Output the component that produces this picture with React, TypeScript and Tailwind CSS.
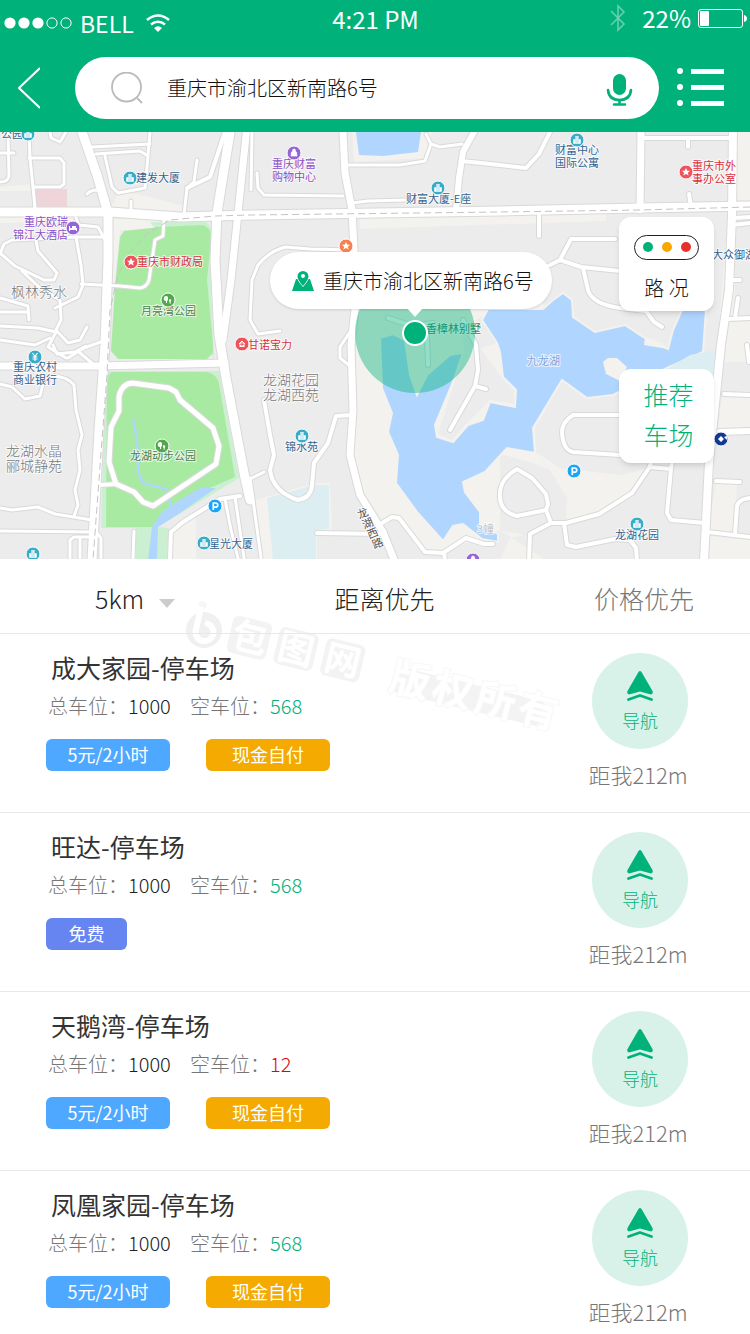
import React from "react";

type Road = [path: string, width: number];
type Label = { x: number; y: number; lines: string[]; color: string; size?: number; weight?: number };
type Poi = { x: number; y: number; color: string; kind: "building" | "star" | "tree" | "bag" | "bed" | "yen" | "cross" | "parking" | "bank" };
type Lot = { name: string; total: number; free: number; tags: ("paid" | "cash" | "free")[] };

const BLUE = "#34648f";
const TEAL = "#39acc8";
const PURPLE = "#8a4fc8";
const RED = "#d8303f";
const GREEN = "#4d7d50";

const lots: Lot[] = [
  { name: "成大家园-停车场", total: 1000, free: 568, tags: ["paid", "cash"] },
  { name: "旺达-停车场", total: 1000, free: 568, tags: ["free"] },
  { name: "天鹅湾-停车场", total: 1000, free: 12, tags: ["paid", "cash"] },
  { name: "凤凰家园-停车场", total: 1000, free: 568, tags: ["paid", "cash"] },
];

const tagStyles = {
  paid: { text: "5元/2小时", className: "w-[124px] bg-[#4fa8ff]" },
  cash: { text: "现金自付", className: "w-[124px] bg-[#f4aa00]" },
  free: { text: "免费", className: "w-[81px] bg-[#6685f0]" },
};

const roads: Road[] = [
  // side streets, west
  ["M29 132 L30 158 L33 187 L35 208", 3],
  ["M29 158 L60 158 L64 163 L64 184 L60 187 L33 187", 3],
  ["M0 153 L14 153 M8 132 L9 176 Q8 182 0 182", 3],
  ["M50 132 L51 138 L60 142 L66 132", 3],
  ["M96 154 L140 151 L148 156 L145 188 L118 193 L112 187 L105 156", 3],
  ["M148 155 L150 132 M92 147 L150 144", 3],
  ["M98 190 Q90 190 87 194 M131 201 L131 212", 3],
  ["M197 160 L194 182 L187 188 L184 215", 3],
  ["M225 132 L210 177 L187 188", 4],
  ["M76 218 L79 225 L98 227 L105 240", 3],
  ["M0 254 L4 244 L12 240 L76 237 L106 237", 3],
  ["M76 237 L81 265 L83 285 L78 297 L55 308", 3],
  ["M0 253 L15 266 L44 280 L54 280 L57 273 L38 251 L36 240", 3],
  ["M22 271 L40 288 L60 300 L61 320 L56 330 L68 343 L80 340 L87 327", 3],
  ["M81 284 L120 286 L140 288 Q147 287 149 280 L155 240 L163 236 L164 219", 3],
  ["M0 298 L28 306 L29 320 M0 312 L28 312 M0 326 L38 328 L56 332 M0 340 L35 345 L50 338", 3],
  ["M56 332 L48 347 L66 358 M68 358 L84 348 L106 340", 3],
  ["M53 345 L57 354 L75 352 L86 346 M80 353 L92 363", 3],
  ["M0 384 L12 387 L25 399 L40 396 L44 380 L54 376", 3],
  ["M54 376 Q68 377 74 385 L76 410 L82 435 L78 450 L80 470 L75 490 L78 505 L74 516", 3],
  ["M0 508 L12 510 L38 507 L55 514 L92 520", 3],
  ["M0 531 L96 532 L101 538 L101 558 M70 558 L70 540 L74 537 L95 537 M80 537 L80 558", 3],
  ["M134 531 L133 558", 3],
  // park loop
  ["M132 383 L169 388 L176 392 L180 400 L213 428 L219 446 L216 464 L153 506 L143 502 L134 492 L116 484 L109 462 L111 427 L119 411 L119 396 Q122 384 132 383Z", 5],
  ["M116 484 L99 485", 4],
  ["M170 558 L171 532 L183 522 L220 499 L240 496", 4],
  ["M225 499 L231 530 L238 558 M235 497 L244 558", 3],
  ["M248 480 L264 472 M250 478 L261 558", 3],
  // centre
  ["M252 132 L251 190 M257 173 L258 188 L264 195 L343 196", 3],
  ["M347 165 L400 165 L425 161 L431 144 L426 134 M431 144 L440 147 L462 144 M352 203 L368 201 L405 200", 3],
  ["M474 132 L463 152 L459 178 L456 210", 6],
  ["M462 161 L500 165 L526 168 L539 154 L550 132", 4],
  ["M354 250 L310 249 L285 247 Q268 252 258 265 L252 280 L250 320 L258 334 L280 331", 3],
  ["M350 332 L340 347 L340 358 L350 366", 3],
  ["M264 400 L270 435 L274 455 L270 470 Q273 492 298 500 Q311 498 312 485 L314 463 L328 443 L336 416 L352 415", 4],
  ["M317 533 L383 534", 4],
  ["M382 523 L392 517 L399 518 L425 552 L443 553 L466 538 L484 544 L493 544 M444 553 L445 560", 4],
  ["M388 318 L413 326 L433 323 M427 335 L428 365 M463 320 L476 345 L478 370 L475 386 L450 430 M475 386 L486 389", 4],
  // east
  ["M640 138 L732 138 M688 138 L688 147 M689 194 L691 207", 4],
  ["M539 213 L539 236 M615 239 L571 239 L560 260 L581 267 L620 271 M560 260 L540 270", 4],
  ["M583 268 L588 290 Q592 304 620 308 L646 311 L654 322 L662 327", 4],
  ["M619 415 L573 415 Q562 422 562 432 Q563 450 573 452 L620 455", 4],
  ["M517 469 L532 478 L546 494 L548 504 L546 510 L517 516 Q501 512 500 498 Q498 480 517 469Z", 4],
  ["M546 510 L551 523 L566 523 L599 514 L632 493 L649 468 L652 460", 4],
  ["M551 523 L530 534 L529 560 M564 523 L567 545 L576 547 L615 539 L630 540 L636 548 L637 560", 4],
  ["M650 467 L671 469 L667 513 L671 520 L705 523 M671 469 L673 455", 4],
  ["M716 481 L740 482 M708 532 L750 537 M735 534 L737 506 Q739 499 750 498", 4],
  ["M724 394 L750 395 M734 218 L750 217 M732 225 L750 223 M730 280 L740 280 M738 298 L735 318 M728 319 L750 318 M747 345 L749 362", 4],
  ["M720 432 L750 431", 6],
  // main roads
  ["M80 126 L97 175 L108 213 L108 260 L105 345 L99 430 L92 560", 9],
  ["M0 366 L100 366 L225 363", 7],
  ["M343 132 L345 173 L352 210 L354 250 L356 300 L351 345 L353 410 L350 455 L360 495 L383 532 L395 562", 7],
  ["M641 132 L640 210", 7],
  ["M733 126 L732 215 L729 290 L721 345 L709 462 L704 562", 8],
  ["M231 126 L217 213 L215 260 L219 335 L226 378 L245 478 L250 500", 9],
  ["M247 126 L238 213 L231 280 L223 340", 7],
  ["M0 212 L110 212 L180 217 L250 215 L500 211 L640 208 L750 206", 9],
];

const labels: Label[] = [
  { x: 1, y: 138, lines: ["公园"], color: BLUE },
  { x: 136, y: 182, lines: ["建发大厦"], color: BLUE },
  { x: 24, y: 226, lines: ["重庆欧瑞"], color: PURPLE },
  { x: 13, y: 239, lines: ["锦江大酒店"], color: PURPLE },
  { x: 137, y: 266, lines: ["重庆市财政局"], color: RED },
  { x: 141, y: 315, lines: ["月亮湾公园"], color: GREEN },
  { x: 11, y: 297, lines: ["枫林秀水"], color: "#777", size: 14, weight: 300 },
  { x: 272, y: 168, lines: ["重庆财富", "购物中心"], color: PURPLE },
  { x: 406, y: 203, lines: ["财富大厦-E座"], color: BLUE },
  { x: 555, y: 154, lines: ["财富中心", "国际公寓"], color: BLUE },
  { x: 692, y: 170, lines: ["重庆市外", "事办公室"], color: RED },
  { x: 712, y: 259, lines: ["大众御湖"], color: BLUE },
  { x: 248, y: 349, lines: ["甘诺宝力"], color: RED },
  { x: 426, y: 333, lines: ["香樟林别墅"], color: "#28836f" },
  { x: 263, y: 385, lines: ["龙湖花园"], color: "#777", size: 14, weight: 300 },
  { x: 263, y: 400, lines: ["龙湖西苑"], color: "#777", size: 14, weight: 300 },
  { x: 285, y: 451, lines: ["锦水苑"], color: BLUE },
  { x: 13, y: 371, lines: ["重庆农村", "商业银行"], color: BLUE },
  { x: 6, y: 456, lines: ["龙湖水晶"], color: "#777", size: 14, weight: 300 },
  { x: 6, y: 471, lines: ["郦城静苑"], color: "#777", size: 14, weight: 300 },
  { x: 130, y: 460, lines: ["龙湖动步公园"], color: GREEN },
  { x: 209, y: 548, lines: ["星光大厦"], color: BLUE },
  { x: 527, y: 365, lines: ["九龙湖"], color: "#83a3d8" },
  { x: 477, y: 533, lines: ["3幢"], color: "#b3b8bd", weight: 300 },
  { x: 615, y: 539, lines: ["龙湖花园"], color: BLUE },
];

const pois: Poi[] = [
  { x: 28, y: 134, color: TEAL, kind: "building" },
  { x: 130, y: 178, color: TEAL, kind: "building" },
  { x: 73, y: 228, color: "#9464d8", kind: "bed" },
  { x: 131, y: 262, color: "#f0525c", kind: "star" },
  { x: 168, y: 300, color: "#52a84c", kind: "tree" },
  { x: 294, y: 153, color: "#9464d8", kind: "bag" },
  { x: 346, y: 246, color: "#f58250", kind: "star" },
  { x: 438, y: 188, color: TEAL, kind: "building" },
  { x: 577, y: 140, color: TEAL, kind: "building" },
  { x: 686, y: 172, color: "#f0525c", kind: "star" },
  { x: 242, y: 344, color: "#f0525c", kind: "cross" },
  { x: 35, y: 357, color: TEAL, kind: "yen" },
  { x: 302, y: 436, color: TEAL, kind: "building" },
  { x: 162, y: 446, color: "#52a84c", kind: "tree" },
  { x: 215, y: 506, color: "#1ba5f8", kind: "parking" },
  { x: 574, y: 471, color: "#1ba5f8", kind: "parking" },
  { x: 204, y: 543, color: TEAL, kind: "building" },
  { x: 33, y: 554, color: TEAL, kind: "building" },
  { x: 637, y: 524, color: TEAL, kind: "building" },
  { x: 473, y: 560, color: "#9464d8", kind: "bag" },
  { x: 721, y: 439, color: "#123a91", kind: "bank" },
];

const glyphs = {
  building: <path d="M-4 4V-1H-2V-4H2V-1H4V4Z M-1 -3V3 M1 -3V3" fill="#fff" stroke={TEAL} strokeWidth="0.5" />,
  star: <path d="M0 -4L1.3 -1.3L4 -1.2L1.9 .7L2.6 3.6L0 2L-2.6 3.6L-1.9 .7L-4 -1.2L-1.3 -1.3Z" fill="#fff" />,
  tree: <path d="M-1.5 -4A2 2 0 0 1 0 -1.5A2 2 0 0 1 -1 1V3H-2V1A2.5 2.5 0 0 1 -1.5 -4M2 -1A1.7 1.7 0 0 1 2.5 2V4H1.7V2A1.7 1.7 0 0 1 2 -1" fill="#fff" />,
  bag: <path d="M-3 3L-2.5 -1H2.5L3 3ZM-1.5 -1V-2.5A1.5 1.5 0 0 1 1.5 -2.5V-1" fill="#fff" stroke="#fff" strokeWidth="0.7" />,
  bed: <path d="M-4 -2H-3V0H4V3H3V2H-3V3H-4ZM-1 -2H3V0H-1Z" fill="#fff" />,
  yen: <path d="M-2.5 -4L0 -.5L2.5 -4M0 -.5V4M-2.5 0H2.5M-2.5 2H2.5" fill="none" stroke="#fff" strokeWidth="1.2" />,
  cross: <path d="M-4 0L0 -4L4 0H3V3.5H-3V0ZM0 -1.8V2.2M-2 .2H2" fill="#fff" stroke="#f0525c" strokeWidth="1" />,
  parking: <path d="M-1.7 4V-3H.7A2 2 0 0 1 .7 1.2H-1.7" fill="none" stroke="#fff" strokeWidth="1.7" />,
  bank: <path d="M0 -3L3 0L0 3L-3 0ZM3 -2L6 -3V1Z" fill="#fff" />,
};

function CityMap() {
  return (
    <svg
      viewBox="0 132 750 427"
      preserveAspectRatio="xMidYMin slice"
      className="block h-[427px] w-full bg-[#ececec]"
      role="img"
      aria-label="重庆市渝北区地图"
    >
      {/* open land */}
      <g fill="#f4f2ee">
        <path d="M352 132L354 162L425 158L432 132Z" />
        <path d="M357 300L354 410L352 455L362 495L384 527L398 514L425 550L445 552L500 530L545 560L500 560L510 538L530 534L550 523L566 523L568 498L550 470L536 452L545 410L562 370L540 290L500 304L440 300Z" />
        <path d="M535 450L560 468L622 475L650 468L630 494L599 514L567 523L566 495Z" />
        <path d="M630 225H727L700 560H708L721 345H735V225Z" />
        <path d="M734 132H750V200H734ZM706 536L750 539V560H704ZM727 320H750V362H722ZM722 397H750V429H718ZM716 483H737L734 534H708Z" />
        <path d="M255 500L316 483L330 483L332 532L317 534V560H262Z" />
        <path d="M120 190L150 197L184 206V211L110 210ZM112 219H205V228L120 230L114 284H110ZM0 217H76V222L0 223ZM0 187L33 184V191H0ZM173 530L196 515V560H171Z" />
        <path d="M360 218L606 213V221L360 229Z" />
      </g>
      {/* blocks on the lake shore */}
      <g fill="#ececec">
        <path d="M462 330L488 312L540 300L482 318L497 343L465 353Z" />
        <path d="M563 382L587 400L620 398V475L560 468L536 452L535 428Z" />
        <path d="M500 454L530 462L550 470L567 498L566 520L530 536L500 530Z" />
        <path d="M464 352L478 345L502 378L514 390V404L490 400L466 424L452 440L438 434Z" />
      </g>
      <path d="M34 189H67V207H36Z" fill="#efd5d9" />
      {/* parks */}
      <g fill="#cbefd1">
        <path d="M150 222L205 221L214 230L211 290L214 358L206 345L160 235Z" />
        <path d="M106 371L219 371L239 478L158 527L169 528L167 560H136V528H101Z" />
      </g>
      <g fill="#a9eaa3">
        <path d="M124 231L160 227L203 225Q213 229 211 240L207 280L213 345V353L207 359H118L111 351L115 287L120 237Z" />
        <path d="M107 376L112 372H207Q217 374 219 384L235 477L205 490L157 527H106Z" />
      </g>
      {/* water */}
      <g fill="#b0d6ff">
        <path d="M356 132L359 155L383 156L418 152L421 132Z" />
        <path d="M147 403L134 418L138 438L140 473L144 482L167 488L172 505L200 488L216 488L180 513L158 527L157 560H148L152 527L163 511L170 507L165 490L142 484L137 473L136 440L132 420Z" />
        <path
          d="M380 338L393 334L405 340L410 375L417 395L427 375L450 355L463 353L453 382L435 425L437 437L453 442L468 425L483 420L490 402L500 404L515 407L516 390L503 377L500 352L497 343L482 320L488 309H543L553 300L563 293L572 300L573 317L595 332L625 325L643 337L668 349L673 330L682 310H706L703 352L667 368L613 395L587 398L562 380L533 428L535 453L507 448L485 472L463 482L465 492L480 512V524L498 534V542L482 539L463 524L453 526L443 541L417 512L396 483L398 455L388 432L392 413L382 388Z"
          stroke="#f4f2ee"
          strokeWidth="2"
        />
      </g>
      <g fill="#dceef2">
        <path d="M267 498L315 485H329V529L316 530V560H273Z" />
        <path d="M667 369L690 355L716 350L714 375H667Z" />
      </g>
      <path d="M603 362L608 358L617 358L627 367L620 381L606 374ZM644 345L668 349L662 343L645 337Z" fill="#f4f2ee" />

      {/* roads: edge first, then surface */}
      <g fill="none" strokeLinejoin="round" strokeLinecap="round">
        {roads.map(([d, w], i) => (
          <path key={i} d={d} stroke="#d9d9d9" strokeWidth={w + 2} />
        ))}
        {roads.map(([d, w], i) => (
          <path key={i} d={d} stroke="#fff" strokeWidth={w} />
        ))}
        <g stroke="#c4c4c4" strokeDasharray="7 4" strokeLinecap="butt">
          <path d="M750 207L640 210L500 212L250 215L215 216L170 220L148 233L130 252L118 275L110 310L107 375L102 440L93 560" />
        </g>
      </g>

      <g fontFamily='"Noto Sans CJK SC", sans-serif' stroke="#fff" strokeOpacity="0.7" strokeWidth="2" paintOrder="stroke">
        {labels.map((label) => (
          <text key={`${label.x}-${label.y}`} fill={label.color} fontSize={label.size ?? 11} fontWeight={label.weight ?? 400}>
            {label.lines.map((line, i) => (
              <tspan key={line} x={label.x} y={label.y + i * 13}>
                {line}
              </tspan>
            ))}
          </text>
        ))}
        <g fill="#555" fontSize="11">
          {["龙", "湖", "西", "路"].map((char, i) => (
            <text key={char} transform={`translate(${359 + i * 5} ${519 + i * 10}) rotate(-22)`}>
              {char}
            </text>
          ))}
        </g>
      </g>

      {pois.map((poi) => (
        <g key={`${poi.x}-${poi.y}`} transform={`translate(${poi.x} ${poi.y})`}>
          <circle r="7" fill={poi.color} stroke="#fff" strokeWidth="1" />
          {glyphs[poi.kind]}
        </g>
      ))}

      {/* current position */}
      <circle cx="415" cy="333" r="60" fill="#00b27a" fillOpacity="0.42" />
      <circle cx="415" cy="333" r="12" fill="#00b27a" stroke="#fff" strokeWidth="2" />
    </svg>
  );
}

function StatusBar() {
  return (
    <div className="grid h-10 grid-cols-3 pl-1 pr-[3px] text-2xl leading-[38px]">
      <div className="flex items-center pt-1">
        <svg className="h-3 w-[68px]" viewBox="0 0 68 12" aria-hidden="true">
          {[6, 20, 34].map((x) => (
            <circle key={x} cx={x} cy="6" r="5.6" fill="#fff" />
          ))}
          {[48, 62].map((x) => (
            <circle key={x} cx={x} cy="6" r="5.1" fill="none" stroke="#fff" />
          ))}
        </svg>
        <span className="ml-2 text-[23px]">BELL</span>
        <svg className="ml-3 h-[19px] w-6" viewBox="0 0 24 19" fill="none" stroke="#fff" strokeWidth="2.6" aria-label="Wi-Fi">
          <path d="M1 6Q12 -3 23 6M5 10.5Q12 5 19 10.5" />
          <path d="M8 14Q12 10.500 16 14L12 18Z" fill="#fff" stroke="none" />
        </svg>
      </div>
      <time className="text-center">4:21 PM</time>
      <div className="flex h-9 items-center justify-end">
        <svg className="h-7 w-4" viewBox="0 0 16 28" fill="none" stroke="#66d0af" strokeWidth="1.600" aria-label="Bluetooth">
          <path d="M1 7L14 20L8 26V2L14 8L1 21" />
        </svg>
        <span className="ml-4">22%</span>
        <svg className="ml-[7px] h-[19px] w-[49px]" viewBox="0 0 49 19" aria-hidden="true">
          <rect x="0.500" y="0.500" width="44" height="18" rx="2.500" fill="none" stroke="#fff" />
          <rect x="2" y="2" width="9" height="15" rx="1" fill="#fff" />
          <path d="M46 6Q49 7 49 9.500Q49 12 46 13Z" fill="#fff" />
        </svg>
      </div>
    </div>
  );
}

function Header() {
  return (
    <header className="bg-[#00b27a] pb-[13px] text-white">
      <StatusBar />
      <div className="mt-[17px] flex items-center pl-[18px] pr-[26px]">
        <button type="button" aria-label="返回">
          <svg className="h-[42px] w-[22px]" viewBox="0 0 22 42" fill="none" stroke="#fff" strokeWidth="2">
            <path d="M22 1L1 21L22 41" />
          </svg>
        </button>
        <div className="ml-[35px] flex h-[62px] flex-1 items-center rounded-full bg-white pl-9 pr-[26px]">
          <svg className="h-8 w-8 shrink-0" viewBox="0 0 32 32" fill="none" stroke="#bbb" strokeWidth="1.800" aria-hidden="true">
            <circle cx="15.500" cy="15" r="14.500" />
            <path d="M26 26L31 31" />
          </svg>
          <input
            type="text"
            aria-label="搜索地址"
            defaultValue="重庆市渝北区新南路6号"
            className="ml-6 min-w-0 flex-1 text-xl font-light text-[#111] outline-none"
          />
          <button type="button" aria-label="语音搜索">
            <svg className="mt-1 h-8 w-[27px]" viewBox="0 0 27 32" fill="none" stroke="#00b27a" strokeWidth="2.600" strokeLinecap="round">
              <rect x="7" y="0" width="13" height="21" rx="6.500" fill="#00b27a" stroke="none" />
              <path d="M2 16Q3 26 13.500 26Q24 26 25 16M13.500 26V30M8 30.500H19" />
            </svg>
          </button>
        </div>
        <button type="button" className="ml-[18px]" aria-label="菜单">
          <svg className="h-10 w-[47px]" viewBox="0 0 47 40" fill="#fff">
            {[3, 19, 35].map((y) => (
              <g key={y}>
                <circle cx="3" cy={y} r="3" />
                <rect x="14" y={y - 2} width="33" height="5" />
              </g>
            ))}
          </svg>
        </button>
      </div>
    </header>
  );
}

function MapSection() {
  return (
    <section className="relative">
      <CityMap />
      <div className="absolute left-[36%] top-[120px] flex h-[57px] items-center rounded-full bg-white pl-[22px] pr-[18px] shadow">
        <svg className="h-5 w-[22px]" viewBox="0 0 22 20" aria-hidden="true">
          <path d="M4 8H18L22 20H0Z" fill="#00b27a" />
          <path
            d="M11 0A5.500 5.500 0 0 0 5.500 5.500C5.500 9 11 15 11 15S16.500 9 16.500 5.500A5.500 5.500 0 0 0 11 0ZM11 3A2 2 0 1 1 11 7A2 2 0 0 1 11 3Z"
            fill="#00b27a"
            fillRule="evenodd"
            stroke="#fff"
            strokeWidth="1.200"
            paintOrder="stroke"
          />
        </svg>
        <span className="ml-[9px] whitespace-nowrap text-xl font-light text-[#111]">重庆市渝北区新南路6号</span>
        <svg className="absolute left-[137px] top-[56px] h-[9px] w-4" viewBox="0 0 16 9" aria-hidden="true">
          <path d="M0 0H16L8 9Z" fill="#fff" />
        </svg>
      </div>
      <div className="absolute right-9 top-[85px] flex w-[95px] flex-col gap-[58px] font-light">
        <button type="button" className="flex h-[94px] flex-col items-center rounded-xl bg-white pt-[18px] text-xl text-[#111] shadow-md">
          <svg className="h-[25px] w-[65px]" viewBox="0 0 65 25" aria-hidden="true">
            <rect x="0.500" y="0.500" width="64" height="24" rx="12" fill="#fff" stroke="#222" />
            <circle cx="14" cy="12" r="5" fill="#00b27a" />
            <circle cx="33" cy="12" r="5" fill="#f9a800" />
            <circle cx="52" cy="12" r="5" fill="#e8302a" />
          </svg>
          <span className="mt-[14px]">路 况</span>
        </button>
        <button type="button" className="h-[94px] rounded-xl bg-white pb-1 pl-1 text-[25px] leading-10 text-[#00b27a] shadow-md">
          推荐
          <br />
          车场
        </button>
      </div>
    </section>
  );
}

function SortBar() {
  return (
    <nav className="flex h-[75px] items-center justify-between border-b border-[#e8e8e8] pl-[95px] pr-14 pt-[6px] text-[25px] font-light text-[#222]">
      <div className="relative w-20">
        <select aria-label="范围" className="w-full appearance-none outline-none" defaultValue="5km">
          <option>5km</option>
          <option>10km</option>
        </select>
        <svg className="pointer-events-none absolute right-0 top-1/2 h-[9px] w-4" viewBox="0 0 16 9" aria-hidden="true">
          <path d="M0 0H16L8 9Z" fill="#ccc" />
        </svg>
      </div>
      <button type="button">距离优先</button>
      <button type="button" className="text-[#777]">
        价格优先
      </button>
    </nav>
  );
}

function LotRow({ lot }: { lot: Lot }) {
  return (
    <li className="flex justify-between border-b border-[#e8e8e8] pb-6 pl-[46px] pr-[50px] pt-[15px] last:border-0 last:pb-0">
      <div>
        <h2 className="pl-[5px] text-[25px] leading-9 text-[#333]">{lot.name}</h2>
        <p className="mt-[3px] flex pl-[2px] text-xl font-light leading-9 text-[#777]">
          总车位：
          <span className="w-[62px] text-[#222]">{lot.total}</span>
          空车位：
          <span className={lot.free < 100 ? "text-[#e60012]" : "text-[#00b27a]"}>{lot.free}</span>
        </p>
        <div className="mt-[15px] flex gap-9">
          {lot.tags.map((tag) => (
            <span key={tag} className={`h-8 rounded-md text-center text-lg leading-[30px] text-white ${tagStyles[tag].className}`}>
              {tagStyles[tag].text}
            </span>
          ))}
        </div>
      </div>
      <div className="flex w-[120px] flex-col items-center pt-1 font-light">
        <button type="button" className="flex h-24 w-24 flex-col items-center rounded-full bg-[#d9f2e9] pt-[18px] text-lg leading-6 text-[#00b27a]">
          <svg className="h-[30px] w-[26px]" viewBox="0 0 26 30" fill="#00b27a" aria-hidden="true">
            <path d="M11.500 1Q13 -1 14.500 1L25.500 20Q26.500 23 24 23.500L13 20.500L2 23.500Q-.5 23 .5 20Z" />
            <path d="M1.500 28.500L13 24.500L24.500 28.500" fill="none" stroke="#00b27a" strokeWidth="2.800" strokeLinecap="round" strokeLinejoin="round" />
          </svg>
          <span className="mt-[7px]">导航</span>
        </button>
        <span className="mt-[11px] pr-1 text-[22px] leading-7 text-[#777]">距我212m</span>
      </div>
    </li>
  );
}

function Watermark() {
  return (
    <svg className="pointer-events-none absolute left-[180px] top-[40px] h-[150px] w-[390px]" viewBox="180 599 390 150" aria-hidden="true">
      <g transform="translate(204 630) rotate(13.500)">
        <circle r="18" fill="#f0f0f0" />
        <circle cx="-7" cy="-24" r="4" fill="#f7f7f7" />
        <path d="M-8 -19V3A9 9 0 1 0 2 -7" fill="none" stroke="#fff" strokeWidth="6" strokeLinecap="round" />
        {[26, 74, 122].map((x) => (
          <rect key={x} x={x} y="-22" width="40" height="38" rx="6" fill="#f3f3f3" />
        ))}
        <rect x="198" y="-10" width="150" height="26" rx="4" fill="#f3f3f3" />
        <g fontFamily='"Noto Sans CJK SC", sans-serif' fill="#fff" fontWeight="700">
          {["包", "图", "网"].map((char, i) => (
            <text key={char} x={46 + i * 48} y="10" fontSize="36" textAnchor="middle">
              {char}
            </text>
          ))}
          <g stroke="#f7f7f7" strokeWidth="2" paintOrder="stroke">
            {["版", "权", "所", "有"].map((char, i) => (
              <text key={char} x={212 + i * 44} y="15" fontSize="40" textAnchor="middle">
                {char}
              </text>
            ))}
          </g>
        </g>
      </g>
    </svg>
  );
}

export default function App() {
  return (
    <div className="min-h-screen bg-white font-['Noto_Sans_CJK_SC',sans-serif]">
      <Header />
      <main>
        <MapSection />
        <div className="relative">
          <Watermark />
          <div className="relative">
            <SortBar />
            <ul>
              {lots.map((lot) => (
                <LotRow key={lot.name} lot={lot} />
              ))}
            </ul>
          </div>
        </div>
      </main>
    </div>
  );
}
